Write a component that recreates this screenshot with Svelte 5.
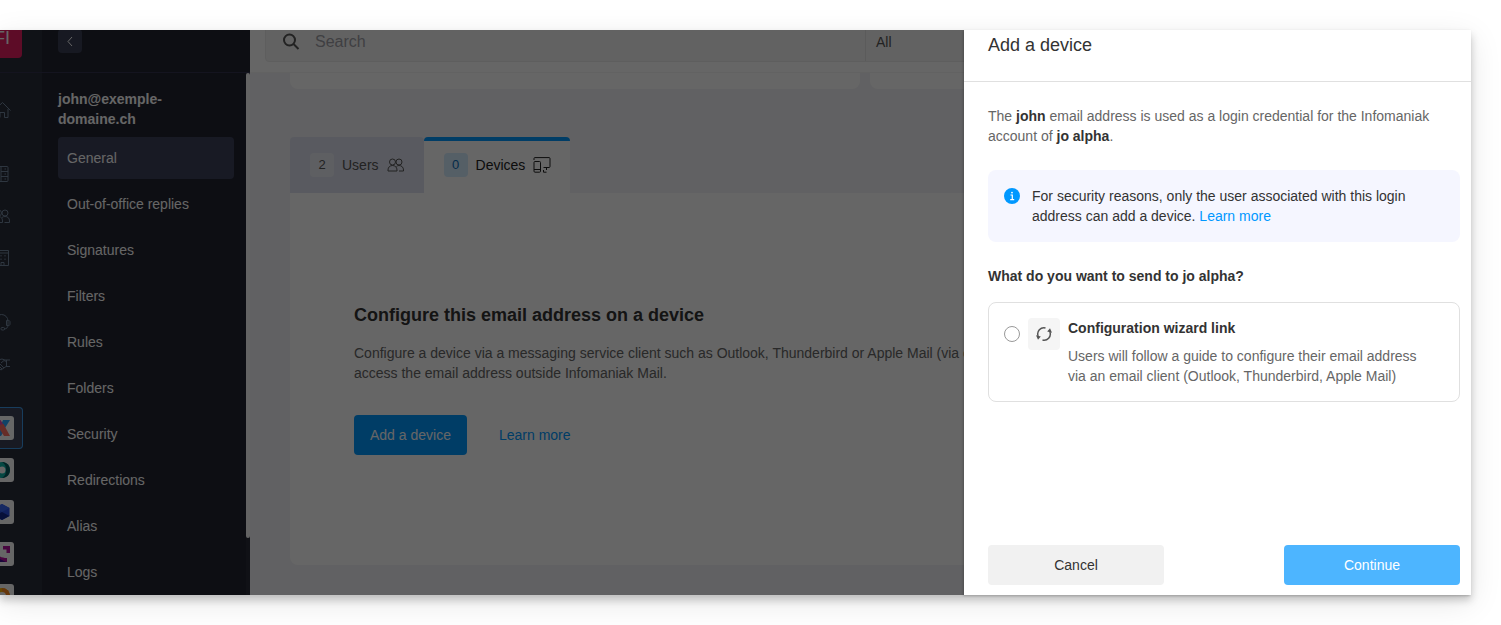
<script lang="ts">
	interface RailItem {
		id: string;
		label: string;
		tile?: boolean;
	}

	const railGroups: RailItem[][] = [
		[{ id: 'home', label: 'Home' }],
		[
			{ id: 'products', label: 'Products' },
			{ id: 'users', label: 'Users' },
			{ id: 'company', label: 'Organisation' }
		],
		[
			{ id: 'support', label: 'Support' },
			{ id: 'partners', label: 'Partners' }
		],
		[
			{ id: 'mail', label: 'Mail service', tile: true },
			{ id: 'drive', label: 'Drive', tile: true },
			{ id: 'hosting', label: 'Hosting', tile: true },
			{ id: 'events', label: 'Events', tile: true },
			{ id: 'chat', label: 'Chat', tile: true }
		]
	];

	const sections = [
		'General',
		'Out-of-office replies',
		'Signatures',
		'Filters',
		'Rules',
		'Folders',
		'Security',
		'Redirections',
		'Alias',
		'Logs'
	];

	let section = $state('General');
	let tab = $state('devices');
	let choice = $state('');
</script>

{#snippet glyph(id: string)}
	<svg class="glyph" viewBox="0 0 18 18" aria-hidden="true">
		{#if id === 'home'}
			<path d="M1 9.500L9.500 1.500l8 8M3 8v8.500h4v-5h4.500v5H15V8" />
		{:else if id === 'products'}
			<rect x="1.500" y="1.500" width="13.500" height="15" rx="1" />
			<path d="M8 1.500v15M8 6.500h7M8 11.500h7M11.500 4H13M11.500 9H13M11.500 14H13" />
		{:else if id === 'users'}
			<circle cx="5.500" cy="6" r="3" />
			<circle cx="12" cy="6" r="3" />
			<path d="M1 15.500V14c0-3 2-4.500 4.500-4.500S9.500 11 9.500 14v1.500zM9 10.500c.8-.7 1.800-1 3-1 2.700 0 4.500 1.500 4.500 4.500v1.500h-5" />
		{:else if id === 'company'}
			<path d="M1 16.500v-15h14.500v15zM1 4h14.500M8 16.500V13.500h3v3" />
			<path stroke-dasharray="1.500 2" d="M8 6v6M12 6v6" />
		{:else if id === 'support'}
			<path d="M2 10V8a6.500 6.500 0 0 1 13 0v4c0 2-1 4-4 4M13.500 7.500h2c1 0 1.500.5 1.500 1.500v2c0 1-.5 1.500-1.500 1.500h-2z" />
			<rect x="8" y="14.500" width="3.500" height="2.500" rx="1" />
		{:else}
			<path d="M1 5h4l4-1 3 1h5M17 11.500h-4l-5 3.500-5-4H1M13.500 5v6.500M8 8l3-2.500 2.500 1M5 10l4 4M7 9l4 4" />
		{/if}
	</svg>
{/snippet}

{#snippet appTile(id: string)}
	<svg class="tile" viewBox="0 0 24 24" aria-hidden="true">
		<rect width="24" height="24" rx="3" fill="#fff" />
		{#if id === 'mail'}
			<path d="M13 4h7l-5 8-4-3z" fill="#2aa8ff" />
			<path d="M11 13l3 2-3 5H4z" fill="#3a9bf0" />
			<path d="M4 4h6.500l4.500 7-3.500 3z" fill="#e24bb0" />
			<path d="M10 9l3.500-1 6.500 12h-6l-4.500-7z" fill="#ff6f61" />
		{:else if id === 'drive'}
			<circle cx="12" cy="12" r="8" fill="#0bb3a8" />
			<path d="M12 4c3 0 8 2 8 8s-5 8-8 8c3-2 4-4 4-8s-1-6-4-8z" fill="#07575c" />
			<circle cx="12" cy="12" r="3.500" fill="#fff" />
		{:else if id === 'hosting'}
			<path d="M12 4l7.500 4v8L12 20l-7.500-4V8z" fill="#2a50e8" />
			<path d="M12 12l7.500 4L12 20l-7.500-4z" fill="#132a8e" />
			<path d="M12 4l7.500 4L12 12 4.500 8z" fill="#3767f5" />
		{:else if id === 'events'}
			<path d="M13 4h7v7h-3.500V7.500H13zM4 4h3v5c0 5 4 7 10 7v4H4z" fill="#b3109d" />
			<path d="M4 14l12 6H4z" fill="#40108f" />
		{:else}
			<circle cx="12" cy="12" r="8" fill="#ffb300" />
			<path d="M12 4a8 8 0 0 1 8 8h-3l-5-5z" fill="#ff8a1f" />
			<circle cx="12" cy="12" r="4" fill="#fff" />
		{/if}
	</svg>
{/snippet}

<div class="page">
	<div class="frame">
		<nav class="rail" aria-label="Manager">
			<div class="top rail-top"><a class="brand" href="#home">FI</a></div>
			<div class="rail-groups">
				{#each railGroups as group}
					<div class="rail-group">
						{#each group as item (item.id)}
							<a class="rail-item" class:current={item.id === 'mail'} href={`#${item.id}`} aria-label={item.label}>
								{#if item.tile}{@render appTile(item.id)}{:else}{@render glyph(item.id)}{/if}
							</a>
						{/each}
					</div>
				{/each}
			</div>
		</nav>

		<aside class="sidebar">
			<div class="top side-top">
				<button class="back" aria-label="Back">
					<svg viewBox="0 0 12 12" aria-hidden="true"><path d="M8 2L4 6.500 8 11" /></svg>
				</button>
			</div>
			<div class="side-scroll">
				<div class="side-body">
					<div class="address">john@exemple-<br />domaine.ch</div>
					<nav class="menu" aria-label="Email address">
						{#each sections as name (name)}
							<a href="#section" class:active={section === name} onclick={() => (section = name)}>{name}</a>
						{/each}
					</nav>
				</div>
				<div class="track"><div class="thumb"></div></div>
			</div>
		</aside>

		<main>
			<header class="top main-top">
				<div class="search">
					<svg viewBox="0 0 18 18" aria-hidden="true"><circle cx="7.500" cy="7" r="5.500" /><path d="M11.500 11l5 5" /></svg>
					<input type="search" placeholder="Search" aria-label="Search" />
					<button class="scope">All</button>
				</div>
			</header>

			<div class="content">
				<div class="cards">
					<div class="card-end"></div>
					<div class="card-end"></div>
				</div>

				<div class="tabs" role="tablist">
					<button class="tab" role="tab" aria-selected={tab === 'users'} onclick={() => (tab = 'users')}>
						<span class="count">2</span>
						Users
						<svg viewBox="0 0 18 16" aria-hidden="true">
							<circle cx="5.500" cy="5" r="3" />
							<circle cx="12" cy="5" r="3" />
							<path d="M1 14V13c0-2.800 2-4.500 4.500-4.500S10 10.200 10 13v1zM9.500 9.500c.7-.7 1.500-1 2.500-1 2.500 0 4.500 1.700 4.500 4.500v1H12" />
						</svg>
					</button>
					<button class="tab" role="tab" aria-selected={tab === 'devices'} onclick={() => (tab = 'devices')}>
						<span class="count">0</span>
						Devices
						<svg viewBox="0 0 18 16" aria-hidden="true">
							<path d="M1 3V1.500C1 .9 1.300.6 1.900.6h14.200c.6 0 .9.300.9.900v8c0 .6-.3 1-.9 1H10.500M13.500 10.500v2.500M10.500 13v2.200h3" />
							<rect x="1" y="4.500" width="6.500" height="10.700" rx="1" />
							<path d="M1 12.500h6.500" />
						</svg>
					</button>
				</div>

				<section class="panel">
					<h2>Configure this email address on a device</h2>
					<p>
						Configure a device via a messaging service client such as Outlook, Thunderbird or Apple Mail (via computer) to<br />
						access the email address outside Infomaniak Mail.
					</p>
					<div class="actions">
						<button class="btn primary">Add a device</button>
						<a href="#learn">Learn more</a>
					</div>
				</section>
			</div>
		</main>

		<div class="backdrop"></div>

		<div class="drawer" role="dialog" aria-labelledby="drawer-title">
			<h1 id="drawer-title">Add a device</h1>
			<div class="drawer-body">
				<p>
					The <b>john</b> email address is used as a login credential for the Infomaniak account of <b>jo alpha</b>.
				</p>
				<div class="info">
					<svg viewBox="0 0 16 16" aria-hidden="true">
						<circle cx="8" cy="8" r="8" fill="#0098ff" />
						<path d="M6.500 7H8.300v4.500M6.200 11.700h4" fill="none" stroke="#fff" stroke-width="1.200" />
						<circle cx="8" cy="4.600" r=".9" fill="#fff" />
					</svg>
					<div>
						For security reasons, only the user associated with this login address can add a device.
						<a href="#learn">Learn more</a>
					</div>
				</div>
				<h3>What do you want to send to jo alpha?</h3>
				<label class="option">
					<input type="radio" name="send" value="wizard" bind:group={choice} />
					<span class="option-icon">
						<svg viewBox="0 0 16 16" aria-hidden="true">
							<path d="M9.500 1.900A6.200 6.200 0 0 0 2.100 10M6.500 14.100A6.200 6.200 0 0 0 13.900 6" />
							<path class="solid" d="M0 9.200l4.800 1.200-2.800 3.400zM16 6.800l-4.800-1.200L14 2.200z" />
						</svg>
					</span>
					<span class="option-text">
						<b>Configuration wizard link</b>
						<span>Users will follow a guide to configure their email address via an email client (Outlook, Thunderbird, Apple Mail)</span>
					</span>
				</label>
			</div>
			<footer>
				<button class="btn plain">Cancel</button>
				<button class="btn light">Continue</button>
			</footer>
		</div>
	</div>
</div>

<style>
	.page {
		padding: 30px 30px 30px 0;
		background: #fff;
		font-family: 'Liberation Sans', Arial, sans-serif;
		font-size: 14px;
		line-height: 20px;
		color: #333;
	}
	.page,
	.page * {
		box-sizing: border-box;
	}
	.frame {
		position: relative;
		display: flex;
		height: calc(100vh - 60px);
		box-shadow:
			0 5px 8px rgba(0, 0, 0, 0.2),
			0 8px 30px rgba(0, 0, 0, 0.1);
	}
	button,
	input {
		font: inherit;
		color: inherit;
		border: 0;
		margin: 0;
	}
	button {
		cursor: pointer;
	}
	a {
		color: #0098ff;
		text-decoration: none;
	}
	h1,
	h2,
	h3,
	p {
		margin: 0;
	}
	svg {
		flex: none;
		fill: none;
		stroke: currentColor;
	}

	/* every column starts with the bottom part of the top bar */
	.top {
		display: flex;
		align-items: flex-end;
		flex: none;
		height: 43px;
		overflow: hidden;
		border-bottom: 1px solid #32344e;
	}

	.rail {
		display: flex;
		flex-direction: column;
		flex: none;
		width: 80px;
		margin-left: -38px;
		background: #2a2d3a;
		overflow: hidden;
	}
	.rail-top {
		justify-content: center;
		padding-bottom: 14px;
	}
	.brand {
		flex: none;
		width: 40px;
		height: 40px;
		border-radius: 4px;
		background: #e91e63;
		color: #fff;
		font-size: 18px;
		line-height: 40px;
		text-align: center;
	}
	.rail-groups {
		display: flex;
		flex-direction: column;
		gap: 22px;
		padding: 16px 19px 0;
	}
	.rail-item {
		display: flex;
		align-items: center;
		justify-content: center;
		height: 42px;
		border-radius: 4px;
		color: #7388a0;
	}
	.rail-item.current {
		background: #3c4257;
		box-shadow: inset 0 0 0 1px #3d9ae8;
	}
	.glyph {
		width: 18px;
		height: 18px;
	}
	.tile {
		width: 24px;
		height: 24px;
		stroke: none;
	}

	.sidebar {
		display: flex;
		flex-direction: column;
		flex: none;
		width: 208px;
		background: #212330;
		color: #fff;
		overflow: hidden;
	}
	.side-top {
		padding: 0 16px 19px;
	}
	.back {
		flex: none;
		width: 24px;
		height: 24px;
		padding: 6px;
		border-radius: 4px;
		background: #3a3f55;
	}
	.back svg {
		display: block;
		width: 12px;
		height: 12px;
	}
	.side-scroll {
		display: flex;
		flex: 1;
		min-height: 0;
	}
	.side-body {
		flex: 1;
		padding: 16px 12px 0 16px;
	}
	.address {
		font-weight: 600;
		margin-bottom: 8px;
	}
	.menu {
		display: flex;
		flex-direction: column;
		gap: 4px;
	}
	.menu a {
		padding: 11px 9px;
		border-radius: 4px;
		color: #fff;
	}
	.menu .active {
		background: #3d425a;
	}
	.track {
		width: 4px;
		background: #282b38;
	}
	.thumb {
		height: 89%;
		border-radius: 2px;
		background: #f8f8f8;
	}

	main {
		display: flex;
		flex-direction: column;
		flex: 1;
		min-width: 0;
		background: #f2f3f7;
	}
	.main-top {
		padding: 0 15px 10px;
		background: #fff;
		border-color: #f4f4f6;
	}
	.search {
		display: flex;
		align-items: center;
		flex: 1;
		height: 40px;
		padding-left: 16px;
		border: 1px solid #ebebeb;
		border-radius: 4px;
		background: #f5f5f5;
		font-size: 16px;
		color: #555;
	}
	.search svg {
		width: 18px;
		height: 18px;
		stroke-width: 2;
	}
	.search input {
		width: 565px;
		padding: 0 15px;
		background: none;
		outline: none;
	}
	.search input::placeholder {
		color: #9f9fa6;
		opacity: 1;
	}
	.scope {
		align-self: stretch;
		padding: 0 10px;
		border-left: 1px solid #e3e3e3;
		background: none;
		font-size: 14px;
		color: #555;
	}

	.content {
		padding: 0 40px 30px;
	}
	.cards {
		display: grid;
		grid-template-columns: 570px 1fr;
		gap: 10px;
		margin-bottom: 48px;
	}
	.card-end {
		height: 16px;
		border-radius: 0 0 8px 8px;
		background: #fff;
	}
	.tabs {
		display: flex;
	}
	.tab {
		display: flex;
		align-items: center;
		height: 56px;
		padding: 0 19px 0 20px;
		border-radius: 4px 4px 0 0;
		background: #dfe2ef;
		color: #555;
	}
	.tab[aria-selected='true'] {
		padding-bottom: 4px;
		border-top: 4px solid #0098ff;
		background: #fff;
		color: #222;
	}
	.tab svg {
		width: 18px;
		height: 16px;
		margin-left: 8px;
	}
	.count {
		width: 24px;
		margin-right: 8px;
		border-radius: 4px;
		background: #eceef6;
		font-size: 13px;
		line-height: 24px;
	}
	.tab[aria-selected='true'] .count {
		background: #d5edff;
		color: #0a6cb8;
	}
	.panel {
		height: 372px;
		padding: 110px 64px 0;
		border-radius: 0 8px 8px 8px;
		background: #fff;
		overflow: hidden;
	}
	.panel h2 {
		margin-bottom: 16px;
		font-size: 18px;
		line-height: 24px;
		font-weight: 600;
	}
	.panel p {
		margin-bottom: 32px;
		color: #666;
		white-space: nowrap;
	}
	.actions {
		display: flex;
		align-items: center;
		gap: 32px;
	}
	.btn {
		height: 40px;
		padding: 0 16px;
		border-radius: 4px;
	}
	.primary {
		background: #0098ff;
		color: #fff;
	}

	.backdrop {
		position: absolute;
		inset: 0;
		background: rgba(0, 0, 0, 0.6);
	}
	.drawer {
		position: absolute;
		top: 0;
		right: 0;
		bottom: 0;
		display: flex;
		flex-direction: column;
		width: 507px;
		background: #fff;
		box-shadow: -1px 1px 2px rgba(0, 0, 0, 0.2);
	}
	.drawer h1 {
		padding: 3px 24px 24px;
		border-bottom: 1px solid #e0e0e0;
		font-size: 18px;
		line-height: 24px;
		font-weight: 400;
	}
	.drawer-body {
		flex: 1;
		padding: 24px 11px 0 24px;
	}
	.drawer p {
		margin-bottom: 24px;
		color: #666;
	}
	b,
	h3 {
		font-size: 14px;
		font-weight: 600;
		color: #333;
	}
	.info {
		display: flex;
		align-items: flex-start;
		gap: 12px;
		margin-bottom: 24px;
		padding: 16px;
		border-radius: 8px;
		background: #f5f6ff;
	}
	.info svg {
		width: 16px;
		height: 16px;
		margin-top: 2px;
		stroke: none;
	}
	.drawer h3 {
		margin-bottom: 16px;
	}
	.option {
		display: flex;
		align-items: flex-start;
		gap: 8px;
		padding: 15px 24px 15px 15px;
		border: 1px solid #e0e0e0;
		border-radius: 8px;
	}
	.option input {
		appearance: none;
		flex: none;
		width: 16px;
		height: 16px;
		margin-top: 8px;
		border: 1px solid #999;
		border-radius: 50%;
	}
	.option input:checked {
		border: 5px solid #0098ff;
	}
	.option-icon {
		display: grid;
		place-items: center;
		flex: none;
		width: 32px;
		height: 32px;
		border-radius: 4px;
		background: #f5f5f5;
		color: #555;
	}
	.option-icon svg {
		width: 16px;
		height: 16px;
		stroke-width: 1.5;
	}
	.solid {
		fill: currentColor;
		stroke: none;
	}
	.option-text {
		display: flex;
		flex-direction: column;
		gap: 8px;
		color: #666;
	}
	footer {
		display: flex;
		justify-content: space-between;
		padding: 0 11px 10px 24px;
	}
	footer .btn {
		width: 176px;
	}
	.plain {
		background: #f1f1f1;
	}
	.light {
		background: #4db5ff;
		color: #fff;
	}
</style>
